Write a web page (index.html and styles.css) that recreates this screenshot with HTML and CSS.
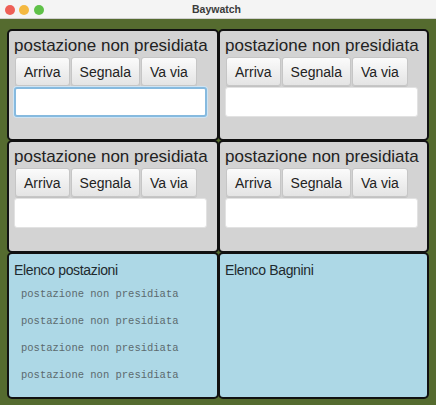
FILE: index.html
```html
<!DOCTYPE html>
<html lang="it">
<head>
<meta charset="utf-8">
<title>Baywatch</title>
<link rel="stylesheet" href="styles.css">
</head>
<body>
<div class="window">
  <div class="titlebar">
    <div class="lights">
      <span class="light red"></span>
      <span class="light yellow"></span>
      <span class="light green"></span>
    </div>
    <div class="title">Baywatch</div>
  </div>
  <div class="content">
    <div class="grid">
      <section class="panel station left top">
        <div class="station-title">postazione non presidiata</div>
        <div class="buttons">
          <button class="btn">Arriva</button>
          <button class="btn">Segnala</button>
          <button class="btn">Va via</button>
        </div>
        <input class="field focused" type="text">
      </section>
      <section class="panel station right top">
        <div class="station-title">postazione non presidiata</div>
        <div class="buttons">
          <button class="btn">Arriva</button>
          <button class="btn">Segnala</button>
          <button class="btn">Va via</button>
        </div>
        <input class="field" type="text">
      </section>
      <section class="panel station left top">
        <div class="station-title">postazione non presidiata</div>
        <div class="buttons">
          <button class="btn">Arriva</button>
          <button class="btn">Segnala</button>
          <button class="btn">Va via</button>
        </div>
        <input class="field" type="text">
      </section>
      <section class="panel station right top">
        <div class="station-title">postazione non presidiata</div>
        <div class="buttons">
          <button class="btn">Arriva</button>
          <button class="btn">Segnala</button>
          <button class="btn">Va via</button>
        </div>
        <input class="field" type="text">
      </section>
      <section class="panel list left">
        <div class="list-title">Elenco postazioni</div>
        <ul class="items">
          <li>postazione non presidiata</li>
          <li>postazione non presidiata</li>
          <li>postazione non presidiata</li>
          <li>postazione non presidiata</li>
        </ul>
      </section>
      <section class="panel list right">
        <div class="list-title">Elenco Bagnini</div>
      </section>
    </div>
  </div>
</div>
</body>
</html>
```
FILE: styles.css
```css
html, body {
  margin: 0;
  padding: 0;
}
body {
  width: 436px;
  height: 405px;
  overflow: hidden;
  background: #556b2f;
  font-family: "Liberation Sans", Arial, sans-serif;
}
.titlebar {
  position: relative;
  height: 18px;
  background: #f4f4f4;
  border-bottom: 1px solid #cfcfcf;
  display: flex;
  align-items: center;
  justify-content: center;
}
.lights {
  position: absolute;
  left: 5px;
  top: 5px;
  display: flex;
  gap: 4px;
}
.light {
  width: 10px;
  height: 10px;
  border-radius: 50%;
  display: block;
}
.light.red { background: #ee5f57; }
.light.yellow { background: #f4b840; }
.light.green { background: #5fc148; margin-left: 1px; }
.title {
  font-weight: bold;
  font-size: 10.5px;
  color: #3b3b3b;
  margin-left: -3px;
}
.content {
  padding: 10px 7px 6px 7px;
}
.grid {
  display: grid;
  grid-template-columns: 211px 211px;
  grid-template-rows: 111px 112px 147px;
}
.panel {
  border: 2px solid #111;
  border-radius: 5px;
  box-sizing: border-box;
  min-width: 0;
}
.panel.left { margin-right: -1px; }
.panel.top { margin-bottom: -1px; }
.station {
  background: #d3d3d3;
  padding: 5px 0 0 5px;
  display: flex;
  flex-direction: column;
  align-items: flex-start;
}
.station-title {
  font-size: 17px;
  line-height: 20px;
  color: #222;
  white-space: nowrap;
}
.buttons {
  display: flex;
  gap: 1px;
  margin-top: 1px;
  margin-left: 1px;
}
.btn {
  height: 29px;
  padding: 0 8px;
  border: 1px solid #c6c6c6;
  border-radius: 3px;
  background: linear-gradient(#fbfbfb, #e4e4e4);
  font-family: "Liberation Sans", Arial, sans-serif;
  font-size: 14px;
  color: #222;
  box-shadow: 0 1px 0 rgba(0,0,0,0.08);
}
.field {
  margin-top: 1px;
  width: 193px;
  height: 30px;
  box-sizing: border-box;
  border: 1px solid #e2e2e2;
  border-radius: 3px;
  background: #fff;
  outline: none;
  padding: 0 6px;
}
.field.focused {
  border: 2px solid #86badf;
  box-shadow: 0 0 0 1px #cfe4f3;
}
.list {
  background: #add8e6;
  padding: 8px 0 0 5px;
}
.list-title {
  font-size: 14px;
  line-height: 17px;
  letter-spacing: -0.35px;
  color: #1e2a2e;
}
.items {
  list-style: none;
  margin: 2px 0 0 0;
  padding: 0 0 0 7px;
}
.items li {
  font-family: "Liberation Mono", "Courier New", monospace;
  font-size: 10.5px;
  line-height: 27px;
  color: #5c6a6e;
  white-space: nowrap;
}
```
